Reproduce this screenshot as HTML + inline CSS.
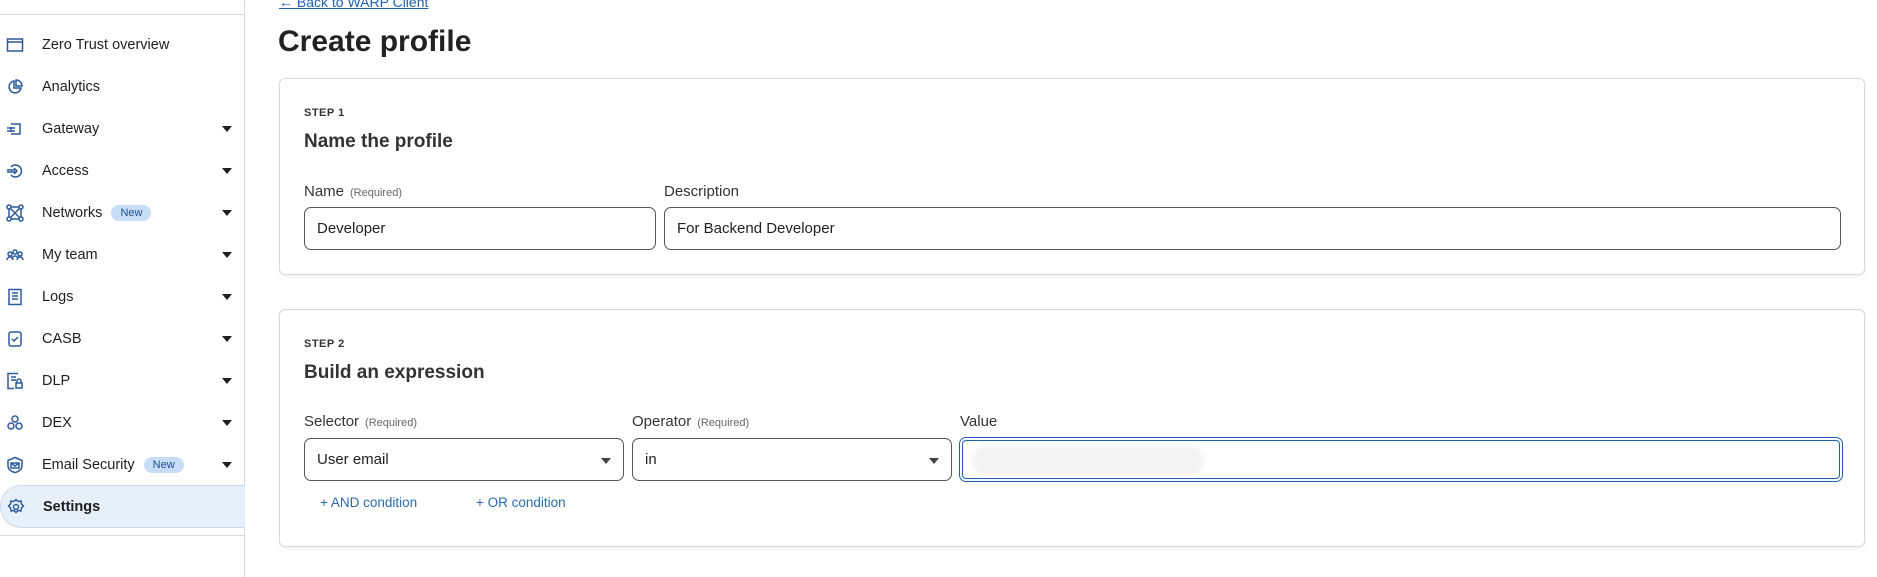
<!DOCTYPE html>
<html><head><style>
*{box-sizing:border-box;margin:0;padding:0}
body{width:1877px;height:577px;background:#fff;font-family:"Liberation Sans",sans-serif;color:#222;position:relative;overflow:hidden}
.sb{position:absolute;left:0;top:0;width:245px;height:577px;border-right:1px solid #d9d9d9}
.topline{position:absolute;left:0;top:14px;width:245px;border-top:1px solid #d9d9d9}
.item{position:absolute;left:0;width:245px;height:42px;display:flex;align-items:center;font-size:14.5px;color:#1d1f20}
.item svg{position:absolute;left:6px;width:18px;height:18px}
.item .t{position:absolute;left:42px}
.item .ar{position:absolute;left:222px;width:0;height:0;border-left:5px solid transparent;border-right:5px solid transparent;border-top:6px solid #1d1f20}
.new{display:inline-block;background:#c7dcf7;color:#1f4f8f;font-size:11px;border-radius:10px;padding:2px 9px;margin-left:9px;vertical-align:1px}
.sel{background:#e6f0fb;border:1px solid #c9d9ec;border-right:none;border-radius:22px 0 0 22px;font-weight:bold}
.botline{position:absolute;left:0;top:535px;width:245px;border-top:1px solid #d9d9d9}
a{position:absolute;left:279px;top:-6px;font-size:14px;color:#1d61b5;text-decoration:underline}
h1{position:absolute;left:278px;top:25px;font-size:30px;font-weight:bold;color:#222}
.card{position:absolute;left:279px;width:1586px;border:1px solid #d8d8d8;border-radius:6px;box-shadow:0 2px 4px rgba(0,0,0,.06);background:#fff}
.step{position:absolute;left:24px;font-size:11px;font-weight:bold;letter-spacing:.5px;color:#333}
.h{position:absolute;left:24px;font-size:19px;font-weight:bold;color:#333}
.lbl{position:absolute;font-size:15px;color:#333}
.lbl small{font-size:11px;color:#666;margin-left:6px}
.inp{position:absolute;height:43px;border:1px solid #555;border-radius:7px;font-size:15px;color:#222;padding-left:12px;display:flex;align-items:center}
.inp .ar{position:absolute;right:12px;top:19px;border-left:5px solid transparent;border-right:5px solid transparent;border-top:6px solid #444}
.cond{position:absolute;font-size:13.5px;color:#2a6bb0}
</style></head><body>
<div class="sb">
<div class="topline"></div>
<div class="item" style="top:24px"><svg viewBox="0 0 18 18" fill="none" stroke="#2c5a9a" stroke-width="1.5"><rect x="1.5" y="3" width="15" height="12"/><path d="M1.5 6h15"/></svg><span class="t">Zero Trust overview</span></div>
<div class="item" style="top:66px"><svg viewBox="0 0 18 18" fill="none" stroke="#2c5a9a" stroke-width="1.5"><path d="M8 3a6 6 0 1 0 7 7H8z"/><path d="M10 2a6 6 0 0 1 6 6h-6z"/></svg><span class="t">Analytics</span></div>
<div class="item" style="top:108px"><svg viewBox="0 0 18 18" fill="none" stroke="#2c5a9a" stroke-width="1.5"><path d="M5 4h9v10H5M1 8h8M1 11h8M5 7v5"/></svg><span class="t">Gateway</span><span class="ar"></span></div>
<div class="item" style="top:150px"><svg viewBox="0 0 18 18" fill="none" stroke="#2c5a9a" stroke-width="1.5"><path d="M5 5a6 6 0 1 1 0 8M1 8h9M1 10h9M8 6l3 3-3 3"/></svg><span class="t">Access</span><span class="ar"></span></div>
<div class="item" style="top:192px"><svg viewBox="0 0 18 18" fill="none" stroke="#2c5a9a" stroke-width="1.5"><circle cx="3" cy="3" r="2"/><circle cx="15" cy="3" r="2"/><circle cx="3" cy="15" r="2"/><circle cx="15" cy="15" r="2"/><path d="M5 3h8M3 5v8M15 5v8M5 15h8M4 4l10 10M14 4L4 14"/></svg><span class="t">Networks<span class="new">New</span></span><span class="ar"></span></div>
<div class="item" style="top:234px"><svg viewBox="0 0 18 18" fill="none" stroke="#2c5a9a" stroke-width="1.5"><circle cx="4" cy="8" r="2"/><circle cx="9" cy="6" r="2"/><circle cx="14" cy="8" r="2"/><path d="M1 14a3 3 0 0 1 6 0M6 13a3 3 0 0 1 6 0M11 14a3 3 0 0 1 6 0"/></svg><span class="t">My team</span><span class="ar"></span></div>
<div class="item" style="top:276px"><svg viewBox="0 0 18 18" fill="none" stroke="#2c5a9a" stroke-width="1.5"><rect x="3" y="1.5" width="12" height="15"/><path d="M6 5h6M6 8h6M6 11h6"/></svg><span class="t">Logs</span><span class="ar"></span></div>
<div class="item" style="top:318px"><svg viewBox="0 0 18 18" fill="none" stroke="#2c5a9a" stroke-width="1.5"><rect x="3" y="2" width="12" height="14" rx="2"/><path d="M6 9l2 2 4-4"/></svg><span class="t">CASB</span><span class="ar"></span></div>
<div class="item" style="top:360px"><svg viewBox="0 0 18 18" fill="none" stroke="#2c5a9a" stroke-width="1.5"><path d="M12 1.5H2v15h6"/><path d="M5 5h5M5 8h5"/><rect x="10" y="11" width="6" height="5"/><path d="M11 11V9a2 2 0 0 1 4 0v2"/></svg><span class="t">DLP</span><span class="ar"></span></div>
<div class="item" style="top:402px"><svg viewBox="0 0 18 18" fill="none" stroke="#2c5a9a" stroke-width="1.5"><circle cx="9" cy="5" r="3"/><circle cx="5" cy="12" r="3"/><circle cx="13" cy="12" r="3"/></svg><span class="t">DEX</span><span class="ar"></span></div>
<div class="item" style="top:444px"><svg viewBox="0 0 18 18" fill="none" stroke="#2c5a9a" stroke-width="1.5"><path d="M9 1.5l7 3v5c0 4-3 6-7 7-4-1-7-3-7-7v-5z"/><rect x="5" y="7" width="8" height="5"/><path d="M5 7l4 3 4-3"/></svg><span class="t">Email Security<span class="new">New</span></span><span class="ar"></span></div>
<div class="item sel" style="top:485px;height:43px"><svg viewBox="0 0 18 18" fill="none" stroke="#2c5a9a" stroke-width="1.5"><circle cx="9" cy="9" r="2.5"/><path d="M9 1.5l2 2 3-.5.5 3 2 2-2 2-.5 3-3-.5-2 2-2-2-3 .5-.5-3-2-2 2-2 .5-3 3 .5z"/></svg><span class="t">Settings</span></div>
<div class="botline"></div>
</div>

<a>← Back to WARP Client</a>
<h1>Create profile</h1>

<div class="card" style="top:78px;height:197px">
<div class="step" style="top:28px">STEP 1</div>
<div class="h" style="top:52px">Name the profile</div>
<div class="lbl" style="left:24px;top:104px">Name<small>(Required)</small></div>
<div class="lbl" style="left:384px;top:104px">Description</div>
<div class="inp" style="left:24px;top:128px;width:352px">Developer</div>
<div class="inp" style="left:384px;top:128px;width:1177px">For Backend Developer</div>
</div>

<div class="card" style="top:309px;height:238px">
<div class="step" style="top:28px">STEP 2</div>
<div class="h" style="top:52px">Build an expression</div>
<div class="lbl" style="left:24px;top:103px">Selector<small>(Required)</small></div>
<div class="lbl" style="left:352px;top:103px">Operator<small>(Required)</small></div>
<div class="lbl" style="left:680px;top:103px">Value</div>
<div class="inp" style="left:24px;top:128px;width:320px">User email<span class="ar"></span></div>
<div class="inp" style="left:352px;top:128px;width:320px">in<span class="ar"></span></div>
<div class="inp" style="left:679px;top:127px;width:884px;height:45px;border:4px double #1d61b5;padding:0"><div style="position:absolute;left:10px;top:5px;width:230px;height:29px;background:#f3f3f3;border-radius:12px;filter:blur(2px)"></div></div>
<div class="cond" style="left:40px;top:185px">+ AND condition</div>
<div class="cond" style="left:196px;top:185px">+ OR condition</div>
</div>
</body></html>
